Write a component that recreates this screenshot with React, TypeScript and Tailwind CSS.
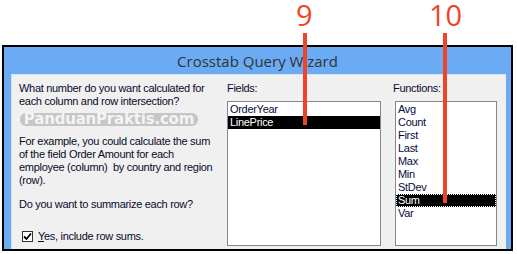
import { useState } from "react";

const fields = ["OrderYear", "LinePrice"];
const functions = ["Avg", "Count", "First", "Last", "Max", "Min", "StDev", "Sum", "Var"];

function ListBox({ items, selected, focus }: { items: string[]; selected: string; focus?: boolean }) {
    return (
        <div className="h-[145px] border border-[#828790] bg-white py-px">
            {items.map((item) => (
                <div
                    key={item}
                    className={
                        item === selected
                            ? focus
                                ? "h-[13px] leading-[11px] pl-[1px] bg-black text-white border border-dotted border-white"
                                : "h-[13px] leading-[13px] pl-[2px] bg-black text-white"
                            : "h-[13px] leading-[13px] pl-[2px] text-[#0a0a3a]"
                    }
                >
                    {item}
                </div>
            ))}
        </div>
    );
}

export default function App() {
    const [rowSums, setRowSums] = useState(true);

    return (
        <div className="relative w-[517px] h-[254px] bg-white overflow-hidden font-['Liberation_Sans',Arial,sans-serif] text-[11px] tracking-[-0.3px] text-[#0a0a2a]">
            {/* callout numbers */}
            <div className="absolute left-[296px] top-0 text-[29px] leading-[29px] tracking-normal text-[#ef4526] font-['Open_Sans',sans-serif]">9</div>
            <div className="absolute left-[303px] top-[33px] w-[4px] h-[92px] bg-[#ef4526] z-10" />
            <div className="absolute left-[429px] top-0 text-[29px] leading-[29px] tracking-normal text-[#ef4526] font-['Open_Sans',sans-serif]">10</div>
            <div className="absolute left-[443px] top-[33px] w-[4px] h-[170px] bg-[#ef4526] z-10" />

            <div className="ml-[2px] mt-[45px] w-[511px] h-[206px] border-2 border-black bg-[#6aabf4] flex flex-col">
                <div className="h-[27px] flex items-center justify-center text-[15px] tracking-normal text-[#333] font-['Open_Sans',sans-serif] pt-px">
                    Crosstab Query Wizard
                </div>
                <div className="flex-1 ml-[7px] mr-[5px] bg-[#f0f0f0] border-l border-t border-[#d4e4f6] flex pt-[7px]">
                    <div className="w-[208px] pl-[7px] whitespace-nowrap">
                        <p className="leading-[13px]">
                            What number do you want calculated for
                            <br />
                            each column and row intersection?
                        </p>
                        <div className="mt-[5px] ml-[1px] w-[178px] h-[13px] rounded-[6px] bg-[#c6c6c6] flex items-center justify-center font-['DejaVu_Sans',sans-serif] font-bold text-[15px] text-[#f4f4f4] tracking-[-0.2px]">
                            PanduanPraktis.com
                        </div>
                        <p className="mt-[9px] leading-[13px]">
                            For example, you could calculate the sum
                            <br />
                            of the field Order Amount for each
                            <br />
                            employee (column)&nbsp; by country and region
                            <br />
                            (row).
                        </p>
                        <p className="mt-[11px] leading-[13px]">Do you want to summarize each row?</p>
                        <label className="mt-[19px] ml-[3px] flex items-center gap-[5px]">
                            <button
                                onClick={() => setRowSums(!rowSums)}
                                className="w-[11px] h-[11px] border border-[#333] bg-white flex items-center justify-center"
                            >
                                {rowSums && (
                                    <svg width="9" height="9" viewBox="0 0 9 9">
                                        <path d="M1 4.5 L3.5 7 L8 1.5" stroke="#000" strokeWidth="1.8" fill="none" />
                                    </svg>
                                )}
                            </button>
                            <span className="leading-[13px]">
                                <span className="underline">Y</span>es, include row sums.
                            </span>
                        </label>
                    </div>
                    <div className="w-[167px] pl-[7px]">
                        <div className="leading-[13px]">Fields:</div>
                        <div className="mt-[6px] w-[154px]">
                            <ListBox items={fields} selected="LinePrice" />
                        </div>
                    </div>
                    <div className="flex-1 pl-[6px]">
                        <div className="leading-[13px]">Functions:</div>
                        <div className="mt-[6px] ml-[2px] w-[102px]">
                            <ListBox items={functions} selected="Sum" focus />
                        </div>
                    </div>
                </div>
            </div>
        </div>
    );
}
